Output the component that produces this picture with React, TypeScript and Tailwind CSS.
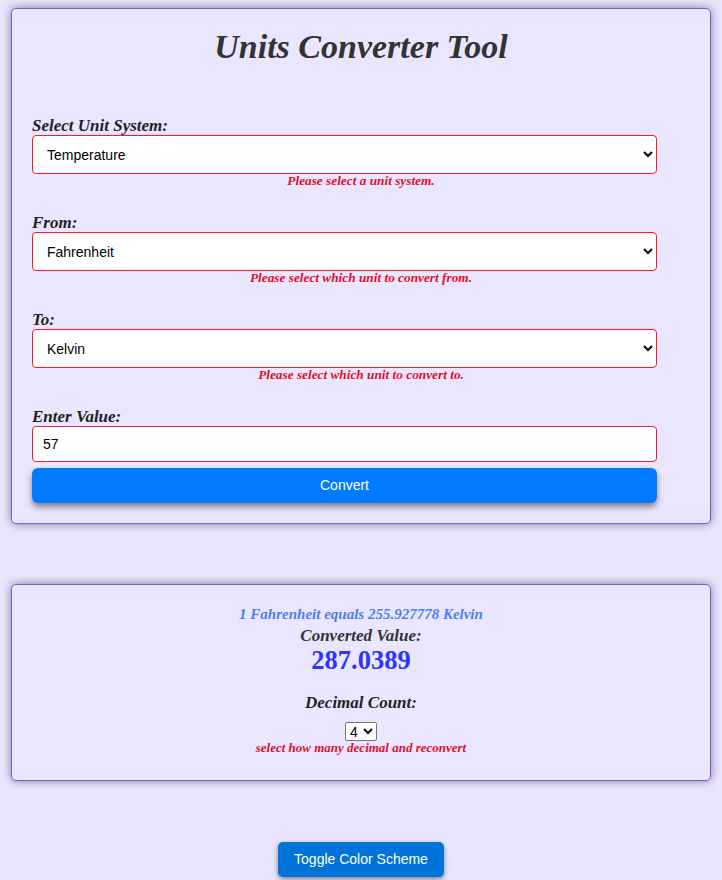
import { useState } from "react";

const serif = "font-['Liberation_Serif',Georgia,serif]";
const sans = "font-['Liberation_Sans',Arial,sans-serif]";

function Field({
  label,
  value,
  options,
  error,
  onChange,
}: {
  label: string;
  value: string;
  options: string[];
  error: string;
  onChange: (v: string) => void;
}) {
  return (
    <div className="mb-[26px]">
      <label className={`block text-[17px] leading-[18px] font-bold italic text-[#222] ${serif}`}>
        {label}
      </label>
      <select
        value={value}
        onChange={(e) => onChange(e.target.value)}
        className={`block w-[625px] h-[39px] pl-[10px] pr-2 bg-white border border-[#ff1a1a] rounded-[4px] text-[14px] text-black ${sans}`}
      >
        {options.map((o) => (
          <option key={o}>{o}</option>
        ))}
      </select>
      <p className={`text-center text-[13.3px] leading-[14px] font-bold italic text-[#e0102a] ${serif}`}>
        {error}
      </p>
    </div>
  );
}

export default function App() {
  const [system, setSystem] = useState("Temperature");
  const [from, setFrom] = useState("Fahrenheit");
  const [to, setTo] = useState("Kelvin");
  const [value, setValue] = useState("57");
  const [decimals, setDecimals] = useState("4");

  const units = ["Celsius", "Fahrenheit", "Kelvin"];

  return (
    <div className="min-h-screen bg-[#eae5fe] px-[11px] pt-2 pb-2">
      {/* Converter form */}
      <div className="bg-[#ebe6ff] border border-[#8b4cf0] rounded-[5px] shadow-[0_0_10px_rgba(0,0,0,0.45)] px-5 pt-[18px] pb-5">
        <h1 className={`text-center text-[34px] leading-[40px] font-bold italic text-[#333] mb-[50px] ${serif}`}>
          Units Converter Tool
        </h1>

        <Field
          label="Select Unit System:"
          value={system}
          options={["Length", "Weight", "Temperature", "Volume"]}
          error="Please select a unit system."
          onChange={setSystem}
        />
        <Field
          label="From:"
          value={from}
          options={units}
          error="Please select which unit to convert from."
          onChange={setFrom}
        />
        <Field
          label="To:"
          value={to}
          options={units}
          error="Please select which unit to convert to."
          onChange={setTo}
        />

        <label className={`block text-[17px] leading-[18px] font-bold italic text-[#222] ${serif}`}>
          Enter Value:
        </label>
        <input
          value={value}
          onChange={(e) => setValue(e.target.value)}
          className={`block w-[625px] h-[36px] px-[10px] bg-white border border-[#e0202a] rounded-[4px] text-[14px] text-black ${sans}`}
        />
        <button
          className={`mt-[6px] w-[625px] h-[35px] bg-[#007bff] text-white text-[14px] rounded-[6px] shadow-[0_4px_6px_rgba(0,0,0,0.45)] ${sans}`}
        >
          Convert
        </button>
      </div>

      {/* Result */}
      <div className="mt-[60px] bg-[#ebe6ff] border border-[#8b4cf0] rounded-[5px] shadow-[0_0_10px_rgba(0,0,0,0.45)] pt-5 pb-[25px] flex flex-col items-center">
        <p className={`text-[15px] leading-[18px] font-bold italic text-[#4a7ff0] ${serif}`}>
          1 Fahrenheit equals 255.927778 Kelvin
        </p>
        <p className={`mt-[3px] text-[17px] leading-[20px] font-bold italic text-[#333] ${serif}`}>
          Converted Value:
        </p>
        <p className={`text-[26.5px] leading-[28px] font-bold text-[#2c35ff] ${serif}`}>
          287.0389
        </p>
        <p className={`mt-[19px] text-[17px] leading-[20px] font-bold italic text-[#222] ${serif}`}>
          Decimal Count:
        </p>
        <select
          value={decimals}
          onChange={(e) => setDecimals(e.target.value)}
          className={`mt-[9px] h-[19px] w-[32px] bg-white border border-[#767676] rounded-[2px] text-[14px] text-black ${sans}`}
        >
          {["0", "1", "2", "3", "4", "5", "6"].map((d) => (
            <option key={d}>{d}</option>
          ))}
        </select>
        <p className={`text-[13px] leading-[14px] font-bold italic text-[#e0102a] ${serif}`}>
          select how many decimal and reconvert
        </p>
      </div>

      <div className="mt-[61px] flex justify-center">
        <button
          className={`h-[35px] px-4 bg-[#0074d9] text-white text-[14px] rounded-[5px] shadow-[0_2px_5px_rgba(0,0,0,0.45)] ${sans}`}
        >
          Toggle Color Scheme
        </button>
      </div>
    </div>
  );
}
